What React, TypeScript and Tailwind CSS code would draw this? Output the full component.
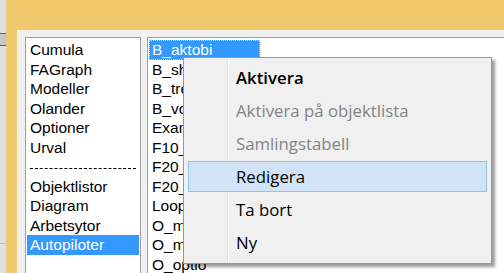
const leftItems = ["Cumula", "FAGraph", "Modeller", "Olander", "Optioner", "Urval"];
const leftItems2 = ["Objektlistor", "Diagram", "Arbetsytor", "Autopiloter"];
const rightItems = [
  "B_aktobi",
  "B_shift",
  "B_trend",
  "B_volym",
  "Example",
  "F10_test",
  "F20_a",
  "F20_b",
  "Loop",
  "O_mod",
  "O_mark",
  "O_optio",
];

const menu = [
  { label: "Aktivera", bold: true },
  { label: "Aktivera på objektlista", disabled: true },
  { label: "Samlingstabell", disabled: true },
  { label: "Redigera", hover: true },
  { label: "Ta bort" },
  { label: "Ny" },
];

const listFont = { fontFamily: '"Liberation Sans", Arial, sans-serif' };
const menuFont = { fontFamily: '"Open Sans", "Noto Sans", sans-serif' };

function Row({ text, selected, focus }: { text: string; selected?: boolean; focus?: boolean }) {
  return (
    <div
      className={
        "flex h-[19.5px] items-center pl-[3px] text-[15.5px] leading-none whitespace-nowrap " +
        (selected ? "bg-[#3399ff] text-white " : "text-black ") +
        (focus ? "outline-1 outline-dotted -outline-offset-1 outline-[#ffd080]" : "")
      }
    >
      {text}
    </div>
  );
}

export default function App() {
  return (
    <div className="relative flex h-[273px] w-[504px] overflow-hidden bg-[#f0c96c]" style={listFont}>
      {/* edge of the window behind */}
      <div className="flex w-[6px] shrink-0 flex-col bg-[#dde1e6]">
        <div className="h-[33px] shrink-0" />
        <div className="h-[13px] shrink-0 border-y border-[#5a6068] bg-[#c4c8cd]" />
        <div className="h-[197px] shrink-0" />
        <div className="h-px shrink-0 bg-[#b8bcc2]" />
      </div>

      <div className="flex flex-1 flex-col pl-[11px] pt-[30px]">
        <div className="flex flex-1 gap-[6px] border-l border-t border-[#f7f3e8] bg-[#f0f0f0] pl-[7px] pt-[6px]">
          {/* category list */}
          <div className="w-[116px] shrink-0 border border-b-0 border-[#a0a0a0] bg-white px-px pt-[2px]">
            {leftItems.map((t) => (
              <Row key={t} text={t} />
            ))}
            <div className="flex h-[19.5px] items-center px-[3px] pt-[3px]">
              <div className="w-full border-t border-dashed border-black" />
            </div>
            {leftItems2.map((t) => (
              <Row key={t} text={t} selected={t === "Autopiloter"} />
            ))}
          </div>

          {/* object list */}
          <div className="w-[420px] shrink-0 border border-b-0 border-r-0 border-[#a0a0a0] bg-white pl-[1px] pt-[2px]">
            <div className="w-[111px]">
              {rightItems.map((t, i) => (
                <Row key={t} text={t} selected={i === 0} focus={i === 0} />
              ))}
            </div>
          </div>
        </div>
      </div>

      {/* context menu */}
      <div
        className="absolute left-[183px] top-[57px] w-[309px] border border-[#979797] bg-[#f0f0f0] pb-[4px] pt-[3px] shadow-[3px_3px_3px_rgba(0,0,0,0.4)]"
        style={menuFont}
      >
        <div className="absolute bottom-[2px] left-[43px] top-[2px] w-[2px] border-l border-[#e0e0e0] bg-white" />
        {menu.map((m) => (
          <div key={m.label} className="relative h-[33px]">
            {m.hover && (
              <div className="absolute inset-x-[4px] inset-y-[1px] border border-[#94c0ec] bg-[#d1e3f6]" />
            )}
            <div
              className={
                "relative flex h-full items-center pl-[52px] text-[16.8px] " +
                (m.disabled ? "text-[#838383] " : "text-black ") +
                (m.bold ? "font-semibold" : "")
              }
            >
              {m.label}
            </div>
          </div>
        ))}
      </div>
    </div>
  );
}
